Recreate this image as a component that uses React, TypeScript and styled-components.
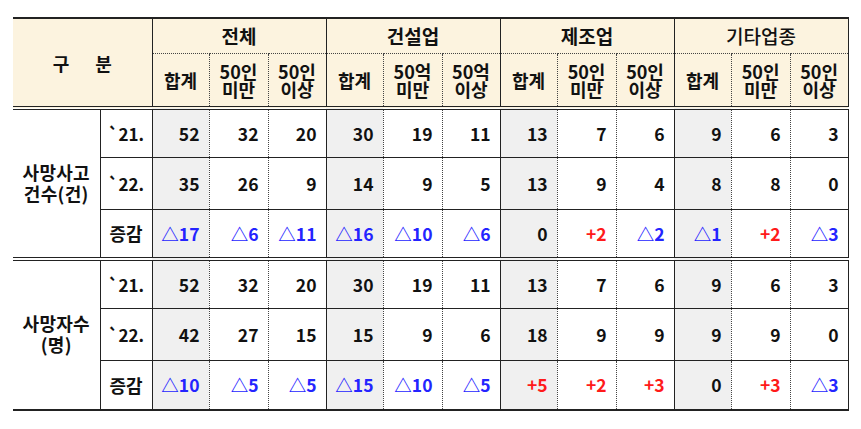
import React from "react";
import styled, { createGlobalStyle } from "styled-components";

const Global = createGlobalStyle`
  html, body { margin: 0; padding: 0; background: #ffffff; }
  body { font-family: "Noto Sans CJK KR", "Noto Sans", sans-serif; color: #111; }
`;

const Page = styled.div`
  padding: 17px 0 0 13px;
`;

const Table = styled.table`
  border-collapse: collapse;
  width: 835px;
  table-layout: fixed;
  font-family: "Noto Sans CJK KR", "Noto Sans", sans-serif;
  font-weight: 700;
  font-size: 16px;
  border-top: 2px solid #222;
  border-bottom: 2px solid #222;
`;

const HeadCell = styled.th<{ $dotRight?: boolean; $solidRight?: boolean; $dotBottom?: boolean; $light?: boolean; $double?: boolean; $title?: boolean }>`
  background: #fcf3df;
  text-align: center;
  vertical-align: middle;
  padding: 0;
  font-size: ${(p) => (p.$title ? "19px" : "18px")};
  font-weight: ${(p) => (p.$light ? 500 : 700)};
  line-height: 18px;
  color: #111;
  border-right: ${(p) => (p.$solidRight ? "1px solid #222" : p.$dotRight ? "1px dotted #444" : "none")};
  border-bottom: ${(p) => (p.$double ? "4px double #222" : p.$dotBottom ? "1px dotted #444" : "none")};
`;

const GroupRow = styled.tr`
  height: 35px;
`;

const SubRow = styled.tr`
  height: 55px;
`;

const BodyRow = styled.tr<{ $h: number }>`
  height: ${(p) => p.$h}px;
`;

const SideCell = styled.td<{ $doubleBottom?: boolean }>`
  text-align: center;
  vertical-align: middle;
  padding: 0 0 2px 0;
  font-size: 18px;
  line-height: 21px;
  letter-spacing: 0.3px;
  font-weight: 700;
  color: #111;
  border-right: 1px solid #222;
  border-bottom: ${(p) => (p.$doubleBottom ? "4px double #222" : "none")};
`;

const YearCell = styled.td<{ $doubleBottom?: boolean }>`
  text-align: center;
  vertical-align: middle;
  padding: 0;
  font-size: 17px;
  font-weight: 700;
  color: #111;
  border-right: 1px solid #222;
  border-bottom: ${(p) => (p.$doubleBottom ? "4px double #222" : "1px solid #222")};
`;

const Label = styled.span`
  font-size: 18px;
`;

type Tone = "plain" | "down" | "up";

const NumCell = styled.td<{ $gray?: boolean; $last?: boolean; $tone: Tone; $doubleBottom?: boolean }>`
  text-align: right;
  vertical-align: middle;
  padding: 0 9px 0 0;
  font-size: 17.5px;
  font-weight: 700;
  background: ${(p) => (p.$gray ? "#f0f0f0" : "#ffffff")};
  color: ${(p) => (p.$tone === "down" ? "#2424ff" : p.$tone === "up" ? "#ff1a1a" : "#111")};
  border-right: ${(p) => (p.$last ? "1px solid #222" : "1px dotted #444")};
  border-bottom: ${(p) => (p.$doubleBottom ? "4px double #222" : "1px solid #222")};
`;

const Spread = styled.span`
  letter-spacing: 26px;
  margin-right: -26px;
`;

const groups = [
  { title: "전체", subs: ["합계", "50인|미만", "50인|이상"], light: false },
  { title: "건설업", subs: ["합계", "50억|미만", "50억|이상"], light: false },
  { title: "제조업", subs: ["합계", "50인|미만", "50인|이상"], light: false },
  { title: "기타업종", subs: ["합계", "50인|미만", "50인|이상"], light: true },
];

const colWidths = [87, 52, ...Array(4).fill([57, 59, 58]).flat()];

type Section = {
  label: string[];
  rows: { year: string; values: string[] }[];
};

const sections: Section[] = [
  {
    label: ["사망사고", "건수(건)"],
    rows: [
      { year: "`21.", values: ["52", "32", "20", "30", "19", "11", "13", "7", "6", "9", "6", "3"] },
      { year: "`22.", values: ["35", "26", "9", "14", "9", "5", "13", "9", "4", "8", "8", "0"] },
      { year: "증감", values: ["△17", "△6", "△11", "△16", "△10", "△6", "0", "+2", "△2", "△1", "+2", "△3"] },
    ],
  },
  {
    label: ["사망자수", "(명)"],
    rows: [
      { year: "`21.", values: ["52", "32", "20", "30", "19", "11", "13", "7", "6", "9", "6", "3"] },
      { year: "`22.", values: ["42", "27", "15", "15", "9", "6", "18", "9", "9", "9", "9", "0"] },
      { year: "증감", values: ["△10", "△5", "△5", "△15", "△10", "△5", "+5", "+2", "+3", "0", "+3", "△3"] },
    ],
  },
];

const rowHeights = [49, 52, 50];

function toneOf(v: string): Tone {
  if (v.startsWith("△")) return "down";
  if (v.startsWith("+")) return "up";
  return "plain";
}

export default function App() {
  return (
    <Page>
      <Global />
      <Table>
        <colgroup>
          {colWidths.map((w, i) => (
            <col key={i} style={{ width: w }} />
          ))}
        </colgroup>
        <thead>
          <GroupRow>
            <HeadCell colSpan={2} rowSpan={2} $solidRight $double>
              <Spread>구분</Spread>
            </HeadCell>
            {groups.map((g) => (
              <HeadCell key={g.title} colSpan={3} $solidRight $dotBottom $light={g.light} $title>
                {g.title}
              </HeadCell>
            ))}
          </GroupRow>
          <SubRow>
            {groups.map((g) =>
              g.subs.map((s, i) => {
                const parts = s.split("|");
                return (
                  <HeadCell key={g.title + i} $double $solidRight={i === 2} $dotRight={i < 2}>
                    {parts.map((p, j) => (
                      <React.Fragment key={j}>
                        {j > 0 && <br />}
                        {p}
                      </React.Fragment>
                    ))}
                  </HeadCell>
                );
              })
            )}
          </SubRow>
        </thead>
        <tbody>
          {sections.map((sec, si) =>
            sec.rows.map((r, ri) => {
              const isLast = ri === sec.rows.length - 1;
              const dbl = isLast && si === 0;
              return (
                <BodyRow key={si + "-" + ri} $h={rowHeights[ri]}>
                  {ri === 0 && (
                    <SideCell rowSpan={3} $doubleBottom={si === 0}>
                      {sec.label[0]}
                      <br />
                      {sec.label[1]}
                    </SideCell>
                  )}
                  <YearCell $doubleBottom={dbl}>
                    {r.year === "증감" ? <Label>{r.year}</Label> : r.year}
                  </YearCell>
                  {r.values.map((v, vi) => (
                    <NumCell
                      key={vi}
                      $gray={vi % 3 === 0}
                      $last={vi % 3 === 2}
                      $tone={toneOf(v)}
                      $doubleBottom={dbl}
                    >
                      {v}
                    </NumCell>
                  ))}
                </BodyRow>
              );
            })
          )}
        </tbody>
      </Table>
    </Page>
  );
}
